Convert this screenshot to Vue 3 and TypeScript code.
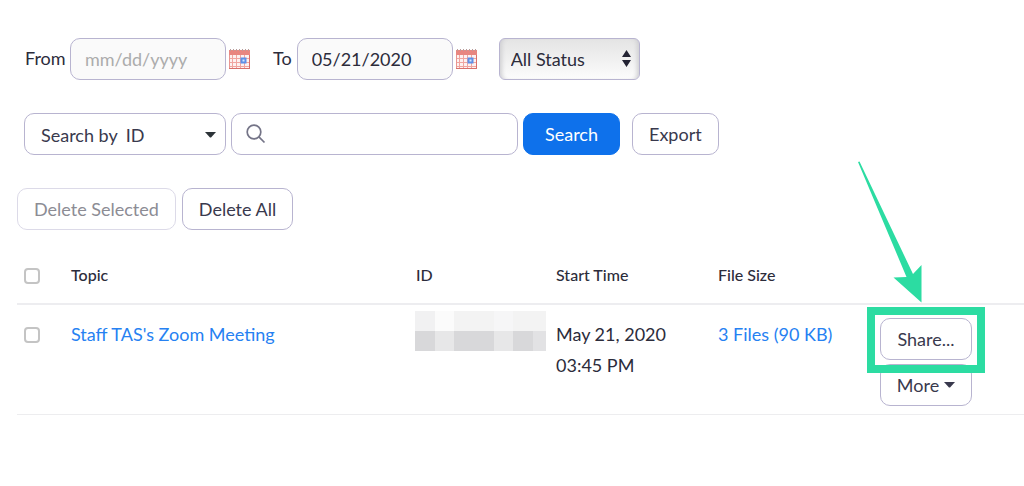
<script setup lang="ts">
import { reactive, ref, computed } from 'vue'

interface Meeting {
  id: number
  topic: string
  date: string
  time: string
  files: string
}

const filters = reactive({ from: '', to: '05/21/2020', status: 'All Status', by: 'ID', query: '' })

const meetings: Meeting[] = [
  { id: 1, topic: "Staff TAS's Zoom Meeting", date: 'May 21, 2020', time: '03:45 PM', files: '3 Files (90 KB)' },
]

const selected = ref<number[]>([])
const allSelected = computed({
  get: () => selected.value.length === meetings.length,
  set: (on: boolean) => {
    selected.value = on ? meetings.map((m) => m.id) : []
  },
})

const gridLines = [1, 2, 3, 4]
const rings = [0, 1, 2, 3, 4, 5, 6]
</script>

<template>
  <main class="page">
    <form class="row dates" @submit.prevent>
      <label class="text from" for="from">From</label>
      <input id="from" v-model="filters.from" class="field date" type="text" placeholder="mm/dd/yyyy" />
      <button class="calendar" type="button" aria-label="Choose start date">
        <svg width="21" height="22" viewBox="0 0 21 22">
          <rect x="0" y="2" width="21" height="19" fill="#e99591" />
          <rect x="0" y="2" width="21" height="5" fill="#e88680" />
          <rect x="1" y="7" width="19" height="13" fill="#fdf1f0" />
          <path v-for="n in gridLines" :key="'v' + n" :d="`M${n * 4 - 0.5} 7V20`" stroke="#f0a5a0" />
          <path d="M1 10.5H20M1 14.5H20M1 18.5H20" stroke="#f0a5a0" />
          <path v-for="n in rings" :key="'r' + n" :d="`M${n * 3 + 1.5} 1V3`" stroke="#b99c9a" />
          <path d="M0 20.5H21M20.5 7V21" stroke="#d8706b" />
          <rect x="12.5" y="10.5" width="4" height="4" fill="#d5e6ff" stroke="#5f90e6" stroke-width="2" />
        </svg>
      </button>
      <label class="text to" for="to">To</label>
      <input id="to" v-model="filters.to" class="field date" type="text" placeholder="mm/dd/yyyy" />
      <button class="calendar" type="button" aria-label="Choose end date">
        <svg width="21" height="22" viewBox="0 0 21 22">
          <rect x="0" y="2" width="21" height="19" fill="#e99591" />
          <rect x="0" y="2" width="21" height="5" fill="#e88680" />
          <rect x="1" y="7" width="19" height="13" fill="#fdf1f0" />
          <path v-for="n in gridLines" :key="'v' + n" :d="`M${n * 4 - 0.5} 7V20`" stroke="#f0a5a0" />
          <path d="M1 10.5H20M1 14.5H20M1 18.5H20" stroke="#f0a5a0" />
          <path v-for="n in rings" :key="'r' + n" :d="`M${n * 3 + 1.5} 1V3`" stroke="#b99c9a" />
          <path d="M0 20.5H21M20.5 7V21" stroke="#d8706b" />
          <rect x="12.5" y="10.5" width="4" height="4" fill="#d5e6ff" stroke="#5f90e6" stroke-width="2" />
        </svg>
      </button>
      <div class="status">
        <select v-model="filters.status" aria-label="Status">
          <option>All Status</option>
        </select>
        <svg class="updown" width="9" height="17" viewBox="0 0 9 17">
          <path d="M4.5 0L9 7H0ZM0 10H9L4.5 17Z" fill="#232333" />
        </svg>
      </div>
    </form>

    <form class="row search" @submit.prevent>
      <div class="field by">
        <label for="by">Search by</label>
        <select id="by" v-model="filters.by">
          <option>ID</option>
        </select>
        <svg class="caret" width="11" height="6" viewBox="0 0 11 6">
          <path d="M0 0H11L6.5 5Q5.5 6 4.5 5Z" fill="#2c3338" />
        </svg>
      </div>
      <div class="field query">
        <svg width="20" height="20" viewBox="0 0 20 20" fill="none" stroke="#747487" stroke-width="1.7">
          <circle cx="8" cy="8" r="6.8" />
          <path d="M12.9 12.9L18.5 18.5" />
        </svg>
        <input v-model="filters.query" type="text" aria-label="Search text" />
      </div>
      <button class="btn primary" type="submit">Search</button>
      <button class="btn export" type="button">Export</button>
    </form>

    <div class="row bulk">
      <button class="btn" type="button" disabled>Delete Selected</button>
      <button class="btn" type="button">Delete All</button>
    </div>

    <table>
      <colgroup>
        <col class="c-check" /><col /><col class="c-id" /><col class="c-time" /><col class="c-size" /><col class="c-act" />
      </colgroup>
      <thead>
        <tr>
          <th><input v-model="allSelected" type="checkbox" aria-label="Select all meetings" /></th>
          <th>Topic</th>
          <th>ID</th>
          <th>Start Time</th>
          <th>File Size</th>
          <th></th>
        </tr>
      </thead>
      <tbody>
        <tr v-for="m in meetings" :key="m.id">
          <td><input v-model="selected" type="checkbox" :value="m.id" :aria-label="m.topic" /></td>
          <td><a href="#">{{ m.topic }}</a></td>
          <td class="id-cell">
            <div class="mosaic">
              <i class="m1" /><i class="m0" /><i class="m2" /><i class="m2" /><i class="m7" /><i class="m2" /><i class="m2" />
              <i class="m5" /><i class="m3" /><i class="m5" /><i class="m5" /><i class="m3" /><i class="m5" /><i class="m4" />
            </div>
          </td>
          <td>{{ m.date }}<br />{{ m.time }}</td>
          <td><a href="#">{{ m.files }}</a></td>
          <td class="act-cell">
            <div class="actions">
              <button class="btn" type="button">Share...</button>
              <button class="btn" type="button">
                More
                <svg width="11" height="6" viewBox="0 0 11 6"><path d="M0 0H11L6.5 5Q5.5 6 4.5 5Z" fill="#39394d" /></svg>
              </button>
              <div class="highlight"></div>
              <svg class="arrow" width="66" height="142" viewBox="0 0 66 142">
                <path d="M0 1L1.5 0.5L55 113L63.5 104V141.5L35.5 116.5L48.5 116Z" fill="#2cdca2" />
              </svg>
            </div>
          </td>
        </tr>
      </tbody>
    </table>
  </main>
</template>

<style>
body {
  margin: 0;
  background: #fff;
}
</style>

<style scoped>
.page {
  box-sizing: border-box;
  padding: 38px 0 32px 17px;
  overflow: hidden;
  font-family: Lato, "Open Sans", sans-serif;
  font-size: 18px;
  line-height: 31px;
  color: #2c2c3b;
}
* {
  box-sizing: border-box;
}
button,
input,
select {
  margin: 0;
  font: inherit;
  color: inherit;
}
.row {
  display: flex;
  align-items: center;
  height: 42px;
}
.dates {
  padding-left: 8px;
}
.text {
  padding-bottom: 2px;
}
.from {
  width: 40px;
}
.field {
  height: 42px;
  border: 1px solid #b8b4d0;
  border-radius: 10px;
  background: #fff;
}
.date {
  width: 156px;
  margin-left: 5px;
  padding: 0 14px;
  background: #fafafa;
}
.date::placeholder {
  color: #acacac;
  opacity: 1;
}
.calendar {
  display: flex;
  margin-left: 3px;
  padding: 0;
  border: 0;
  background: none;
}
.to {
  margin-left: 23px;
}
.status {
  position: relative;
  width: 141px;
  margin-left: 22px;
}
.status select {
  display: block;
  width: 100%;
  height: 42px;
  padding: 0 11px;
  border: 1px solid #b8b4d0;
  border-radius: 6px;
  appearance: none;
  background: linear-gradient(#e4e4e4, #fcfcfc);
  box-shadow: inset 5px 0 4px -3px #cfcfd2, inset -5px 0 4px -3px #cfcfd2;
}
.updown {
  position: absolute;
  right: 9px;
  top: 12px;
  pointer-events: none;
}
.search {
  gap: 5px;
  margin-top: 33px;
  padding-left: 7px;
}
.by {
  display: flex;
  align-items: center;
  width: 202px;
  padding: 2px 9px 0 16px;
  color: #39394d;
}
.by select {
  flex: 1;
  min-width: 0;
  padding: 0 0 0 8px;
  border: 0;
  appearance: none;
  background: none;
}
.query {
  display: flex;
  align-items: center;
  gap: 8px;
  width: 287px;
  padding: 0 14px;
}
.query input {
  flex: 1;
  min-width: 0;
  border: 0;
  outline: 0;
  background: none;
}
.btn {
  height: 42px;
  padding: 0 16px;
  border: 1px solid #b8b4d0;
  border-radius: 10px;
  background: #fff;
  color: #39394d;
  line-height: 38px;
  white-space: nowrap;
}
.btn:disabled {
  border-color: #dcdae8;
  color: #8c8c94;
}
.primary {
  padding: 0 21px;
  border-color: #0e71eb;
  background: #0e71eb;
  color: #fff;
}
.export {
  margin-left: 7px;
}
.bulk {
  gap: 6px;
  margin-top: 33px;
}
table {
  width: 100%;
  margin-top: 16px;
  table-layout: fixed;
  border-collapse: separate;
  border-spacing: 0;
}
.c-check {
  width: 54px;
}
.c-id {
  width: 140px;
}
.c-time,
.c-size {
  width: 162px;
}
.c-act {
  width: 144px;
}
th {
  height: 59px;
  padding: 0 0 1px;
  border-bottom: 2px solid #ededf0;
  font-size: 16px;
  font-weight: 500;
  text-align: left;
}
td {
  padding: 14px 0 0;
  border-bottom: 1px solid #ededef;
  vertical-align: top;
}
input[type='checkbox'] {
  display: block;
  width: 16px;
  height: 16px;
  margin: 4px 0 0 7px;
  border: 2px solid #c4c4c4;
  border-radius: 4px;
  appearance: none;
  background: #fff;
}
input[type='checkbox']:checked {
  background: #0e71eb;
}
td input[type='checkbox'] {
  margin-top: 8px;
}
a {
  color: #2681f2;
  text-decoration: none;
}
.id-cell {
  padding-top: 6px;
}
.mosaic {
  display: grid;
  grid-template-columns: repeat(6, 3fr) 2fr;
  grid-auto-rows: 20px;
  width: 131px;
  margin-left: -1px;
}
.m0 { background: #fbfbfb; }
.m7 { background: #f6f6f7; }
.m1 { background: #f1f1f2; }
.m2 { background: #f3f3f3; }
.m3 { background: #e7e7e8; }
.m4 { background: #e2e2e4; }
.m5 { background: #d8d8da; }
.act-cell {
  padding: 13px 0 8px;
}
.actions {
  position: relative;
  display: grid;
  gap: 4px;
  width: 92px;
}
.actions .btn {
  display: flex;
  align-items: center;
  justify-content: center;
  gap: 5px;
  padding: 0;
}
.highlight {
  position: absolute;
  left: -13px;
  top: -11px;
  width: 118px;
  height: 66px;
  border: 8px solid #2cdca2;
}
.arrow {
  position: absolute;
  left: -22px;
  top: -157px;
}
</style>
